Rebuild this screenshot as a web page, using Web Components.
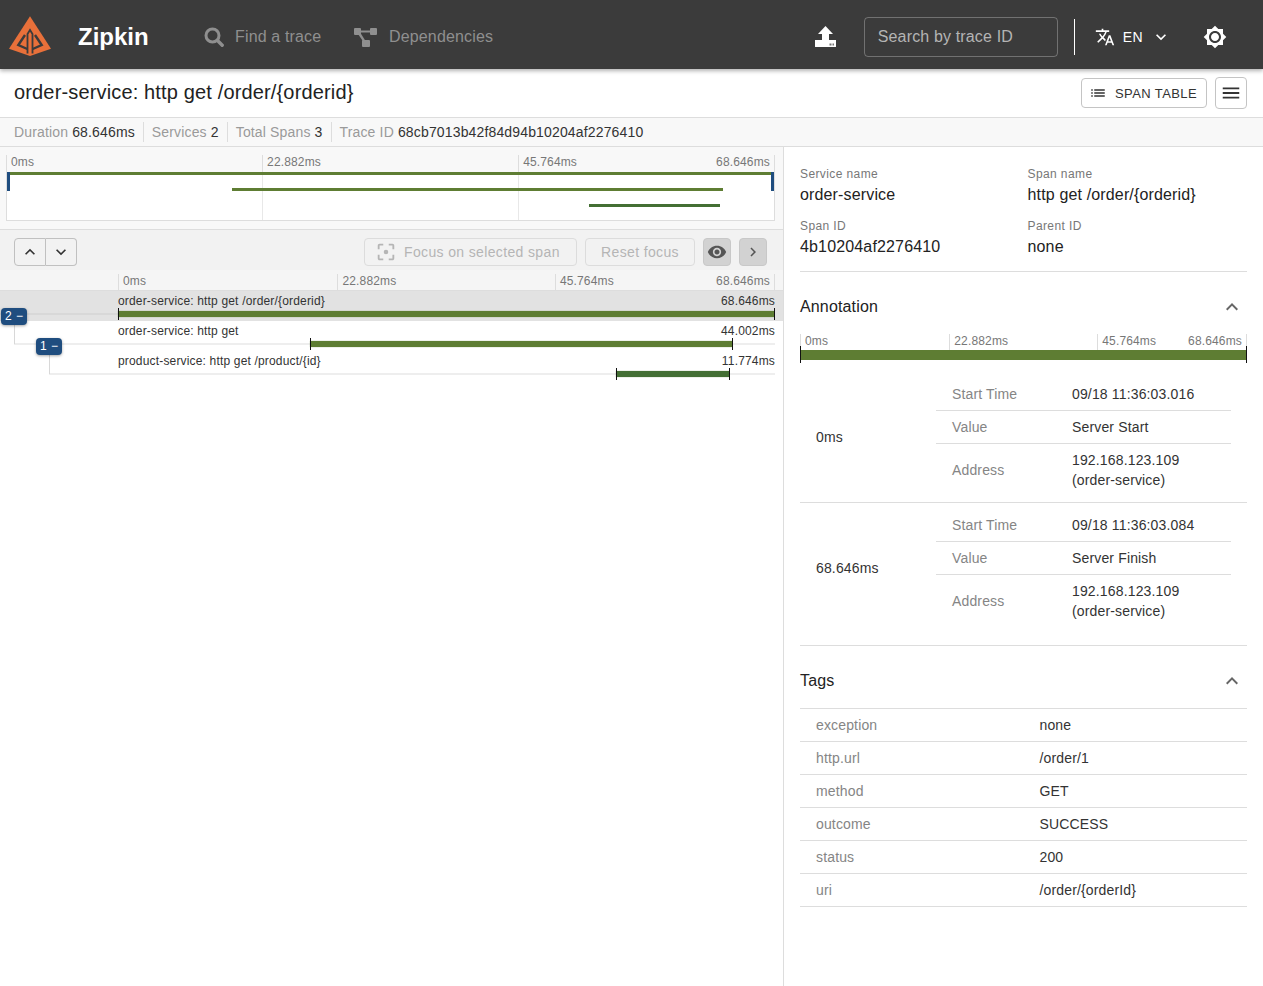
<!DOCTYPE html>
<html>
<head>
<meta charset="utf-8">
<title>Zipkin</title>
<style>
  html, body { margin: 0; height: 100%; overflow: hidden; background: #fff; }
  body { font-family: "Liberation Sans", Arial, sans-serif; color: #333; }
</style>
</head>
<body>
<zk-app></zk-app>

<script>
const ICONS = {
  translate: 'M12.87 15.07l-2.54-2.51.03-.03c1.74-1.94 2.98-4.17 3.71-6.53H17V4h-7V2H8v2H1v1.99h11.17C11.5 7.92 10.44 9.75 9 11.35 8.07 10.32 7.3 9.19 6.69 8h-2c.73 1.63 1.73 3.17 2.98 4.56l-5.09 5.02L4 19l5-5 3.11 3.11.76-2.04zM18.5 10h-2L12 22h2l1.12-3h4.75L21 22h2l-4.5-12zm-2.62 7l1.62-4.33L19.12 17h-3.24z',
  brightness: 'M20 8.69V4h-4.69L12 .69 8.69 4H4v4.69L.69 12 4 15.31V20h4.69L12 23.31 15.31 20H20v-4.69L23.31 12 20 8.69zM12 18c-3.31 0-6-2.69-6-6s2.69-6 6-6 6 2.69 6 6-2.69 6-6 6zm0-10c-2.21 0-4 1.79-4 4s1.79 4 4 4 4-1.79 4-4-1.79-4-4-4z',
  eye: 'M12 4.5C7 4.5 2.73 7.61 1 12c1.73 4.39 6 7.5 11 7.5s9.27-3.11 11-7.5c-1.73-4.39-6-7.5-11-7.5zM12 17c-2.76 0-5-2.24-5-5s2.24-5 5-5 5 2.24 5 5-2.24 5-5 5zm0-8c-1.66 0-3 1.34-3 3s1.34 3 3 3 3-1.34 3-3-1.34-3-3-3z',
  focus: 'M12 9.5a2.5 2.5 0 1 0 0 5 2.5 2.5 0 0 0 0-5zM5 15H3v4c0 1.1.9 2 2 2h4v-2H5v-4zM5 5h4V3H5c-1.1 0-2 .9-2 2v4h2V5zm14-2h-4v2h4v4h2V5c0-1.1-.9-2-2-2zm0 16h-4v2h4c1.1 0 2-.9 2-2v-4h-2v4z',
  up: 'M7.41 15.41L12 10.83l4.59 4.58L18 14l-6-6-6 6z',
  down: 'M16.59 8.59L12 13.17 7.41 8.59 6 10l6 6 6-6z',
  right: 'M10 6L8.59 7.41 13.17 12l-4.58 4.59L10 18l6-6z',
  list: 'M3 13h2v-2H3v2zm0 4h2v-2H3v2zm0-8h2V7H3v2zm4 4h14v-2H7v2zm0 4h14v-2H7v2zM7 7v2h14V7H7z',
  menu: 'M3 18h18v-2H3v2zm0-5h18v-2H3v2zm0-7v2h18V6H3z'
};

// svg icon, size comes from the size attribute
class ZkIcon extends HTMLElement {
  connectedCallback() {
    const size = this.getAttribute('size') || 24;
    const path = ICONS[this.getAttribute('name')];
    this.attachShadow({ mode: 'open' }).innerHTML = `
      <style>
        :host { display: inline-flex; width: ${size}px; height: ${size}px; flex: none; }
        svg { width: 100%; height: 100%; fill: currentColor; display: block; }
      </style>
      <svg viewBox="0 0 24 24"><path d="${path}"></path></svg>`;
  }
}

const headerTemplate = document.createElement('template');
headerTemplate.innerHTML = `
  <style>
    :host {
      display: flex; align-items: center; height: 65px; padding-top: 4px;
      background: #3b3b3b; color: #fff; position: relative; z-index: 2;
      box-shadow: 0 2px 4px rgba(0,0,0,.3);
      font-family: "Liberation Sans", Arial, sans-serif;
    }
    .logo { width: 44px; height: 44px; margin-left: 8px; margin-top: -1px; flex: none; }
    .brand { font-size: 24px; font-weight: 700; margin-left: 26px; width: 126px; }
    .nav { display: flex; align-items: center; font-size: 16px; letter-spacing: .15px; color: #8f8f8f; }
    .nav svg { flex: none; }
    .find { width: 149px; }
    .find svg { width: 20px; height: 20px; margin-right: 11px; }
    .deps svg { width: 24px; height: 24px; margin-right: 12px; }
    .spacer { flex: 1; }
    .upload { width: 21px; height: 21px; margin-right: 28px; flex: none; }
    .search {
      width: 179px; height: 38px; padding: 0 0 0 13px; border: 1px solid rgba(255,255,255,.28);
      border-radius: 4px; display: flex; align-items: center;
      font-size: 16px; letter-spacing: .15px; color: #b4b4b4;
    }
    .divider { width: 1px; height: 36px; background: #fff; margin: 0 20px 0 16px; }
    .lang { font-size: 14px; letter-spacing: .4px; margin: 0 8px 0 8px; }
    .gear { margin: 0 36px 0 32px; }
  </style>
  <svg class="logo" viewBox="0 0 44 44">
    <path fill="#e8703a" d="M22 2.300 L43 34.700 L22 42 L1 34.700 Z"></path>
    <path fill="none" stroke="#3b3b3b" stroke-width="2.400" d="M17 21 L10.300 31 L19.300 35 M27 21 L33.700 31 L24.700 35"></path>
    <path fill="none" stroke="#3b3b3b" stroke-width="1.800" d="M19.500 39.500 V20 L22 16 L24.500 20 V39.500"></path>
  </svg>
  <div class="brand">Zipkin</div>
  <div class="nav find">
    <svg viewBox="0 0 20 20">
      <circle cx="8.500" cy="8.500" r="6.500" fill="none" stroke="currentColor" stroke-width="3"></circle>
      <path d="M13.500 13.500 L18.200 18.200" stroke="currentColor" stroke-width="3.400" stroke-linecap="round"></path>
    </svg>
    Find a trace
  </div>
  <div class="nav deps">
    <svg viewBox="0 0 24 24" fill="currentColor">
      <rect x="1" y="3" width="7" height="7" rx="1"></rect>
      <rect x="17" y="3" width="7" height="7" rx="1"></rect>
      <rect x="9" y="15" width="8" height="7" rx="1"></rect>
      <path d="M7 5.500 H18 V7.500 H7 Z"></path>
      <path d="M5 9 L7.500 8 L12.500 16 L10.500 17 Z"></path>
    </svg>
    Dependencies
  </div>
  <div class="spacer"></div>
  <svg class="upload" viewBox="0 0 21 21">
    <path fill="#fff" d="M10.500 0 L18 8 H14 V14 H21 V20.500 a.5 .5 0 0 1 -.5 .5 H.5 a.5 .5 0 0 1 -.5 -.5 V14 H7 V8 H3 Z"></path>
    <rect x="14.500" y="17.500" width="2" height="2" fill="#3b3b3b" opacity=".7"></rect>
    <rect x="17.500" y="17.500" width="1.500" height="2" fill="#3b3b3b" opacity=".7"></rect>
  </svg>
  <div class="search">Search by trace ID</div>
  <div class="divider"></div>
  <zk-icon name="translate" size="20"></zk-icon>
  <div class="lang">EN</div>
  <zk-icon name="down" size="20"></zk-icon>
  <zk-icon class="gear" name="brightness" size="24"></zk-icon>
`;
class ZkHeader extends HTMLElement {
  connectedCallback() {
    this.attachShadow({ mode: 'open' }).appendChild(headerTemplate.content.cloneNode(true));
  }
}

const titleTemplate = document.createElement('template');
titleTemplate.innerHTML = `
  <style>
    :host {
      display: flex; align-items: center; height: 48px; padding: 0 16px 0 14px;
      background: #fff; border-bottom: 1px solid #ddd;
    }
    h1 { flex: 1; margin: 0 0 2px; font-size: 20px; font-weight: 400; color: #222; letter-spacing: .15px; }
    button {
      display: flex; align-items: center; background: #fff; color: #333;
      border: 1px solid #c4c4c4; border-radius: 4px; padding: 0; font: 13px "Liberation Sans", Arial, sans-serif;
      letter-spacing: .4px;
    }
    .table { width: 126px; height: 30px; margin-right: 8px; padding-left: 7px; }
    .table zk-icon { margin-right: 8px; }
    .menu { width: 32px; height: 32px; justify-content: center; }
  </style>
  <h1><slot></slot></h1>
  <button class="table"><zk-icon name="list" size="18"></zk-icon>SPAN TABLE</button>
  <button class="menu"><zk-icon name="menu" size="22"></zk-icon></button>
`;
class ZkTitle extends HTMLElement {
  connectedCallback() {
    this.attachShadow({ mode: 'open' }).appendChild(titleTemplate.content.cloneNode(true));
  }
}

const statsTemplate = document.createElement('template');
statsTemplate.innerHTML = `
  <style>
    :host {
      display: flex; align-items: center; height: 28px; padding-left: 6px;
      background: #f8f8f8; border-bottom: 1px solid #ddd; font-size: 14px; letter-spacing: .15px;
    }
  </style>
  <slot></slot>
`;
class ZkStats extends HTMLElement {
  connectedCallback() {
    this.attachShadow({ mode: 'open' }).appendChild(statsTemplate.content.cloneNode(true));
  }
}

class ZkStat extends HTMLElement {
  connectedCallback() {
    this.attachShadow({ mode: 'open' }).innerHTML = `
      <style>
        :host { display: block; padding: 0 8px; line-height: 20px; color: #333; border-left: 1px solid #ddd; }
        :host(:first-child) { border-left: 0; }
        span { color: #9a9a9a; }
      </style>
      <span>${this.getAttribute('label')}</span> <slot></slot>`;
  }
}

// ruler with the four time labels, used three times with small differences
class ZkTicks extends HTMLElement {
  connectedCallback() {
    const labels = ['0ms', '22.882ms', '45.764ms', '68.646ms'];
    this.attachShadow({ mode: 'open' }).innerHTML = `
      <style>
        :host {
          display: grid; grid-template-columns: var(--tick-columns, 33.4% 33.1% 1fr); height: 16px;
          font-size: 12px; letter-spacing: .15px; color: #777; box-sizing: border-box;
        }
        div { border-left: 1px solid #ddd; padding: 0 4px; line-height: 14px; display: flex; justify-content: space-between; }
        div:last-child { border-right: 1px solid #ddd; }
      </style>
      <div>${labels[0]}</div><div>${labels[1]}</div>
      <div><span>${labels[2]}</span><span>${labels[3]}</span></div>`;
  }
}

const minimapTemplate = document.createElement('template');
minimapTemplate.innerHTML = `
  <style>
    :host {
      display: block; height: 74px; padding: 8px 8px 0 6px; background: #f8f8f8;
      border-bottom: 1px solid #ddd; --tick-columns: 33.3% 33.3% 1fr;
    }
    zk-ticks { height: 17px; }
    .canvas {
      position: relative; height: 48px; background: #fff;
      border-bottom: 1px solid #ddd; border-left: 1px solid #ddd; border-right: 1px solid #ddd;
    }
    .grid { position: absolute; top: 0; bottom: 0; width: 1px; background: #e8e8e8; }
    .bar { position: absolute; height: 3px; background: #5e7d33; }
    .handle { position: absolute; top: 0; width: 3px; height: 19px; background: #1f4d7f; }
  </style>
  <zk-ticks></zk-ticks>
  <div class="canvas">
    <div class="grid" style="left:33.3%"></div>
    <div class="grid" style="left:66.6%"></div>
    <div class="bar" style="top:0;left:0;right:0"></div>
    <div class="bar" style="top:16px;left:29.3%;width:64.1%"></div>
    <div class="bar" style="top:32px;left:75.9%;width:17.1%;background:#446f34"></div>
    <div class="handle" style="left:0"></div>
    <div class="handle" style="right:0"></div>
  </div>
`;
class ZkMinimap extends HTMLElement {
  connectedCallback() {
    this.attachShadow({ mode: 'open' }).appendChild(minimapTemplate.content.cloneNode(true));
  }
}

const toolbarTemplate = document.createElement('template');
toolbarTemplate.innerHTML = `
  <style>
    :host {
      display: flex; align-items: center; gap: 8px; height: 40px; padding: 4px 16px 0 14px;
      background: #f2f2f2; box-sizing: border-box;
    }
    .group { display: flex; margin-right: auto; }
    button {
      display: flex; align-items: center; justify-content: center; box-sizing: border-box; height: 28px;
      padding: 0; border: 1px solid #c0c0c0; border-radius: 4px; background: transparent; color: #333;
      font: 14px "Liberation Sans", Arial, sans-serif; letter-spacing: .36px;
    }
    .group button:first-child { width: 32px; border-radius: 4px 0 0 4px; }
    .group button:last-child { width: 31px; border-left: 0; border-radius: 0 4px 4px 0; }
    .off { color: #b5b5b5; border-color: #dcdcdc; }
    .focus { width: 213px; justify-content: flex-start; padding-left: 10px; }
    .focus zk-icon { margin-right: 7px; }
    .reset { width: 110px; }
    .on { width: 28px; background: #d2d2d2; border-color: #c8c8c8; color: #555; }
  </style>
  <div class="group">
    <button><zk-icon name="up" size="20"></zk-icon></button>
    <button><zk-icon name="down" size="20"></zk-icon></button>
  </div>
  <button class="off focus"><zk-icon name="focus" size="22"></zk-icon>Focus on selected span</button>
  <button class="off reset">Reset focus</button>
  <button class="on"><zk-icon name="eye" size="20"></zk-icon></button>
  <button class="on"><zk-icon name="right" size="18"></zk-icon></button>
`;
class ZkToolbar extends HTMLElement {
  connectedCallback() {
    this.attachShadow({ mode: 'open' }).appendChild(toolbarTemplate.content.cloneNode(true));
  }
}

// one row of the trace timeline. from/to are percent of the timeline width
class ZkSpanRow extends HTMLElement {
  connectedCallback() {
    const from = this.getAttribute('from');
    const to = this.getAttribute('to');
    const indent = this.getAttribute('indent');
    const colour = this.getAttribute('colour') || '#5e7d33';
    const badge = this.getAttribute('badge');
    this.attachShadow({ mode: 'open' }).innerHTML = `
      <style>
        :host {
          display: block; position: relative; height: 30px; padding-left: 118px; padding-right: 8px;
          font-size: 12px; letter-spacing: .17px; color: #333; box-sizing: border-box;
        }
        :host([selected]) { background: #e2e2e2; }
        .text { display: flex; justify-content: space-between; line-height: 20px; height: 20px; }
        .tree { position: absolute; left: ${indent}px; right: 8px; top: 22px; height: 2px; background: #eee; }
        :host([selected]) .tree { background: #d8d8d8; }
        .up { position: absolute; left: ${indent}px; top: -10px; height: 33px; width: 1px; background: #d8d8d8; }
        .time { position: absolute; left: 118px; right: 8px; top: 17px; height: 12px; }
        .bar { position: absolute; top: 3px; height: 6px; left: ${from}%; width: ${to - from}%; background: ${colour}; box-shadow: 0 0 1px rgba(94,125,51,.6); }
        .end { position: absolute; top: 0; width: 1px; height: 12px; background: #111; }
        .badge {
          position: absolute; left: ${this.getAttribute('badge-left')}px; top: 17px; width: 26px; height: 17px; box-sizing: border-box;
          background: #1f4d7f; color: #fff; border-radius: 4px; font-size: 12px; line-height: 16px;
          padding-left: 4px; letter-spacing: .5px; box-shadow: 0 1px 3px rgba(0,0,0,.35); z-index: 1;
        }
      </style>
      <div class="tree"></div>
      ${indent > 2 ? '<div class="up"></div>' : ''}
      <div class="text"><span><slot></slot></span><span>${this.getAttribute('duration')}</span></div>
      <div class="time">
        <div class="bar"></div>
        <div class="end" style="left:${from}%"></div>
        <div class="end" style="left:${to}%"></div>
      </div>
      ${badge ? `<div class="badge">${badge} −</div>` : ''}`;
  }
}

const traceTemplate = document.createElement('template');
traceTemplate.innerHTML = `
  <style>
    :host { display: block; border-right: 1px solid #ddd; background: #fff; }
    .ruler {
      height: 21px; box-sizing: border-box; padding: 4px 8px 0 118px; background: #f5f5f5;
      border-bottom: 1px solid #ddd;
    }
  </style>
  <zk-minimap></zk-minimap>
  <zk-toolbar></zk-toolbar>
  <div class="ruler"><zk-ticks></zk-ticks></div>
  <slot></slot>
`;
class ZkTrace extends HTMLElement {
  connectedCallback() {
    this.attachShadow({ mode: 'open' }).appendChild(traceTemplate.content.cloneNode(true));
  }
}

class ZkField extends HTMLElement {
  connectedCallback() {
    this.attachShadow({ mode: 'open' }).innerHTML = `
      <style>
        :host { display: block; }
        div { font-size: 12px; line-height: 18px; letter-spacing: .4px; color: #777; }
        p { margin: 0; font-size: 16px; line-height: 24px; letter-spacing: .15px; color: #222; }
      </style>
      <div>${this.getAttribute('label')}</div>
      <p><slot></slot></p>`;
  }
}

class ZkSection extends HTMLElement {
  connectedCallback() {
    this.attachShadow({ mode: 'open' }).innerHTML = `
      <style>
        :host { display: block; padding: 20px 0 0; }
        header {
          display: flex; align-items: center; justify-content: space-between; height: 30px;
          margin-bottom: 12px; font-size: 16px; line-height: 24px; letter-spacing: .15px; color: #222;
        }
        zk-icon { color: #666; margin-right: 3px; }
      </style>
      <header>${this.getAttribute('heading')}<zk-icon name="up" size="24"></zk-icon></header>
      <slot></slot>`;
  }
}

// left column is the time offset, right column the nested key/value rows
class ZkAnnotation extends HTMLElement {
  connectedCallback() {
    this.attachShadow({ mode: 'open' }).innerHTML = `
      <style>
        :host {
          display: grid; grid-template-columns: 136px 295px; align-items: center; padding: 6px 0;
          border-bottom: 1px solid #ddd; font-size: 14px; letter-spacing: .15px; color: #333;
        }
        .offset { padding-left: 16px; }
      </style>
      <div class="offset">${this.getAttribute('offset')}</div>
      <div><slot></slot></div>`;
  }
}

class ZkAnnoRow extends HTMLElement {
  connectedCallback() {
    this.attachShadow({ mode: 'open' }).innerHTML = `
      <style>
        :host {
          display: grid; grid-template-columns: 120px 1fr; align-items: center; box-sizing: border-box;
          min-height: 33px; padding: 0 16px; border-bottom: 1px solid #ddd; line-height: 20px;
        }
        :host(:last-child) { border-bottom: 0; padding-top: 6px; padding-bottom: 6px; }
        span { color: #858585; }
      </style>
      <span>${this.getAttribute('label')}</span>
      <div><slot></slot></div>`;
  }
}

class ZkTag extends HTMLElement {
  connectedCallback() {
    this.attachShadow({ mode: 'open' }).innerHTML = `
      <style>
        :host {
          display: grid; grid-template-columns: 239.5px 1fr; align-items: center; height: 33px; box-sizing: border-box;
          border-bottom: 1px solid #ddd; font-size: 14px; letter-spacing: .15px; color: #333;
        }
        span { padding-left: 16px; color: #858585; }
      </style>
      <span>${this.getAttribute('label')}</span><div><slot></slot></div>`;
  }
}

const detailTemplate = document.createElement('template');
detailTemplate.innerHTML = `
  <style>
    :host { display: block; padding: 18px 16px 0; background: #fff; overflow: hidden; }
    .fields { display: grid; grid-template-columns: 1fr 1fr; column-gap: 8px; row-gap: 10px; padding-bottom: 12px; border-bottom: 1px solid #ddd; }
    .anno { position: relative; height: 26px; margin-bottom: 12px; }
    .anno .barline { position: relative; height: 10px; background: #5e7d33; }
    .anno i { position: absolute; top: -4px; width: 1px; height: 17px; background: #111; }
    .blocks { border-bottom: 1px solid #ddd; padding-bottom: 12px; }
    .tags { border-top: 1px solid #ddd; }
  </style>
  <div class="fields">
    <zk-field label="Service name">order-service</zk-field>
    <zk-field label="Span name">http get /order/{orderid}</zk-field>
    <zk-field label="Span ID">4b10204af2276410</zk-field>
    <zk-field label="Parent ID">none</zk-field>
  </div>
  <zk-section heading="Annotation">
    <div class="anno">
      <zk-ticks></zk-ticks>
      <div class="barline"><i style="left:0"></i><i style="right:0"></i></div>
    </div>
    <div class="blocks">
      <zk-annotation offset="0ms">
        <zk-anno-row label="Start Time">09/18 11:36:03.016</zk-anno-row>
        <zk-anno-row label="Value">Server Start</zk-anno-row>
        <zk-anno-row label="Address">192.168.123.109 (order-service)</zk-anno-row>
      </zk-annotation>
      <zk-annotation offset="68.646ms" style="border-bottom:0">
        <zk-anno-row label="Start Time">09/18 11:36:03.084</zk-anno-row>
        <zk-anno-row label="Value">Server Finish</zk-anno-row>
        <zk-anno-row label="Address">192.168.123.109 (order-service)</zk-anno-row>
      </zk-annotation>
    </div>
  </zk-section>
  <zk-section heading="Tags">
    <div class="tags">
      <zk-tag label="exception">none</zk-tag>
      <zk-tag label="http.url">/order/1</zk-tag>
      <zk-tag label="method">GET</zk-tag>
      <zk-tag label="outcome">SUCCESS</zk-tag>
      <zk-tag label="status">200</zk-tag>
      <zk-tag label="uri">/order/{orderId}</zk-tag>
    </div>
  </zk-section>
`;
class ZkDetail extends HTMLElement {
  connectedCallback() {
    this.attachShadow({ mode: 'open' }).appendChild(detailTemplate.content.cloneNode(true));
  }
}

const appTemplate = document.createElement('template');
appTemplate.innerHTML = `
  <style>
    :host { display: flex; flex-direction: column; height: 100vh; }
    main { flex: 1; display: grid; grid-template-columns: 784px 1fr; min-height: 0; }
  </style>
  <zk-header></zk-header>
  <zk-title>order-service: http get /order/{orderid}</zk-title>
  <zk-stats>
    <zk-stat label="Duration">68.646ms</zk-stat>
    <zk-stat label="Services">2</zk-stat>
    <zk-stat label="Total Spans">3</zk-stat>
    <zk-stat label="Trace ID">68cb7013b42f84d94b10204af2276410</zk-stat>
  </zk-stats>
  <main>
    <zk-trace>
      <zk-span-row selected from="0" to="99.85" indent="0" badge="2" badge-left="1" duration="68.646ms">order-service: http get /order/{orderid}</zk-span-row>
      <zk-span-row from="29.2" to="93.5" indent="14" badge="1" badge-left="36" duration="44.002ms">order-service: http get</zk-span-row>
      <zk-span-row from="75.8" to="93" indent="49" colour="#446f34" duration="11.774ms">product-service: http get /product/{id}</zk-span-row>
    </zk-trace>
    <zk-detail></zk-detail>
  </main>
`;
class ZkApp extends HTMLElement {
  connectedCallback() {
    this.attachShadow({ mode: 'open' }).appendChild(appTemplate.content.cloneNode(true));
  }
}

customElements.define('zk-icon', ZkIcon);
customElements.define('zk-header', ZkHeader);
customElements.define('zk-title', ZkTitle);
customElements.define('zk-stats', ZkStats);
customElements.define('zk-stat', ZkStat);
customElements.define('zk-ticks', ZkTicks);
customElements.define('zk-minimap', ZkMinimap);
customElements.define('zk-toolbar', ZkToolbar);
customElements.define('zk-span-row', ZkSpanRow);
customElements.define('zk-trace', ZkTrace);
customElements.define('zk-field', ZkField);
customElements.define('zk-section', ZkSection);
customElements.define('zk-annotation', ZkAnnotation);
customElements.define('zk-anno-row', ZkAnnoRow);
customElements.define('zk-tag', ZkTag);
customElements.define('zk-detail', ZkDetail);
customElements.define('zk-app', ZkApp);
</script>
</body>
</html>
